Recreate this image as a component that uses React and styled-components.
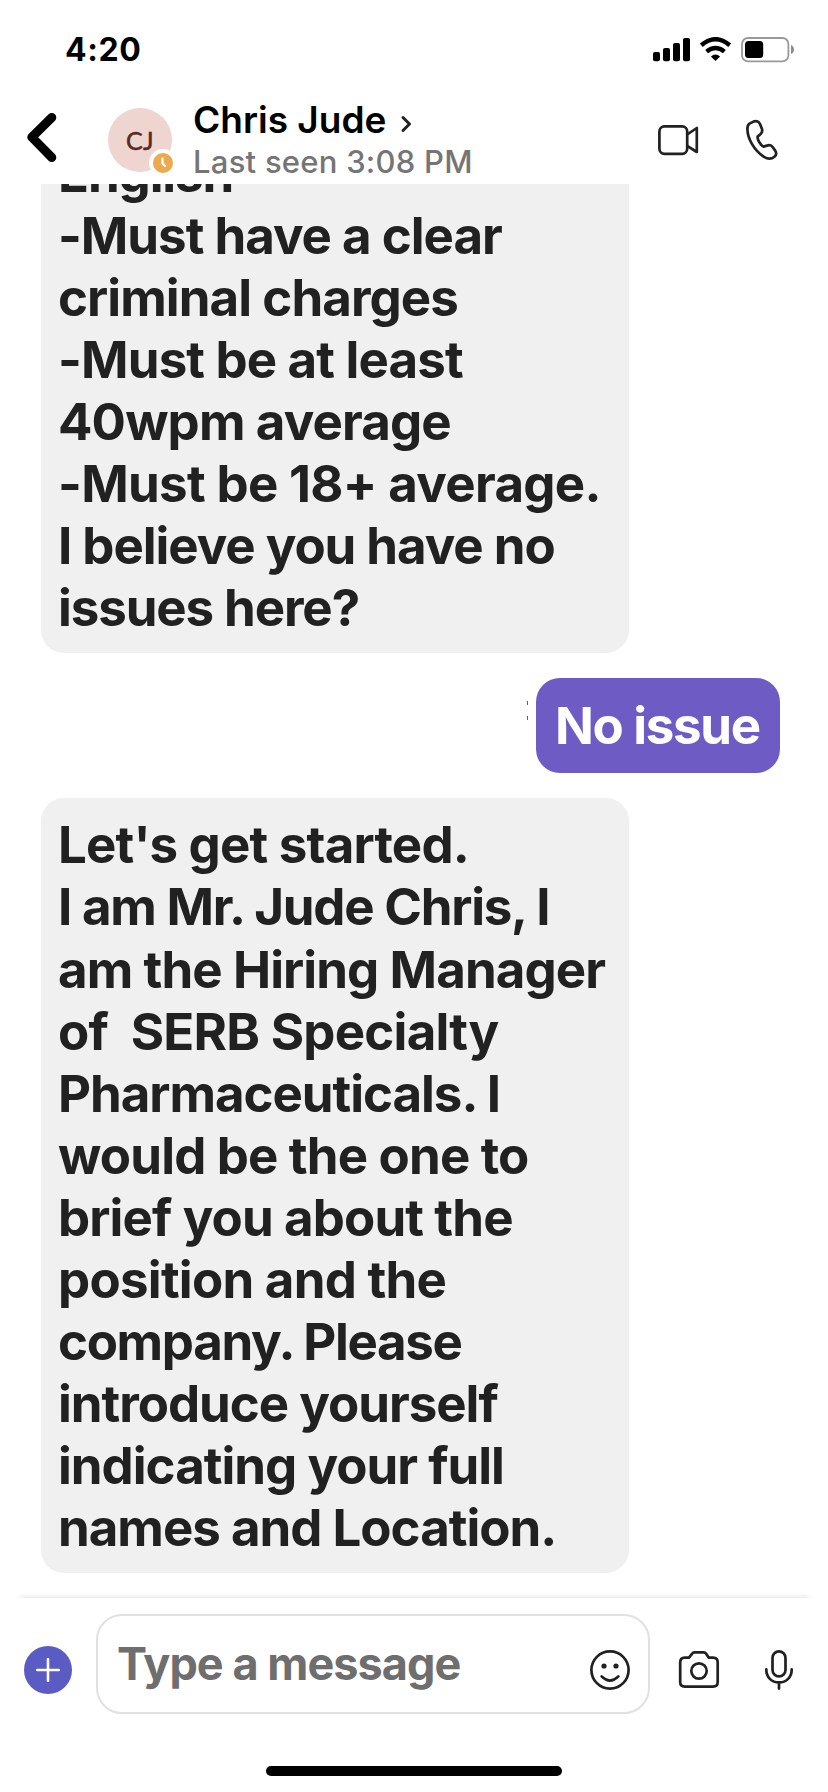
import React from 'react'
import styled, { createGlobalStyle } from 'styled-components';

const requirements = [
  { text: 'English', track: -1.1 },
  { text: '-Must have a clear', track: -1.0 },
  { text: 'criminal charges', track: -0.92 },
  { text: '-Must be at least', track: -0.83 },
  { text: '40wpm average', track: -0.87 },
  { text: '-Must be 18+ average.', track: -0.67 },
  { text: 'I believe you have no', track: -1.05 },
  { text: 'issues here?', track: -1.1 },
]

const intro = [
  { text: "Let's get started.", track: -0.8 },
  { text: 'I am Mr. Jude Chris, I', track: -1.23 },
  { text: 'am the Hiring Manager', track: -0.9 },
  { text: 'of  SERB Specialty', track: -0.75 },
  { text: 'Pharmaceuticals. I', track: -1.03 },
  { text: 'would be the one to', track: -0.83 },
  { text: 'brief you about the', track: -0.87 },
  { text: 'position and the', track: -0.73 },
  { text: 'company. Please', track: -1.33 },
  { text: 'introduce yourself', track: -1.02 },
  { text: 'indicating your full', track: -0.98 },
  { text: 'names and Location.', track: -1.0 },
]

const Message = ({ lines }) => (
  <Bubble>
    {lines.map((line) => (
      <Line key={line.text} $track={line.track}>{line.text}</Line>
    ))}
  </Bubble>
)

const StatusIcons = () => (
  <Icon width="142" height="26" viewBox="653 37 142 26">
    <g fill="#000">
      <rect x="653" y="52" width="7" height="9.2" rx="2" />
      <rect x="663" y="48" width="7" height="13.2" rx="2" />
      <rect x="673" y="43" width="7" height="18.2" rx="2" />
      <rect x="683" y="38" width="7" height="23.2" rx="2" />
      <path d="M715.5 61 L710.9 56.4 Q715.5 52.8 720.1 56.4 Z" />
      <rect x="745" y="41" width="18.2" height="17" rx="3.5" />
    </g>
    <path d="M701.3 45.2 Q715.5 33.2 729.7 45.2 M706.6 51.6 Q715.5 44.4 724.4 51.6" fill="none" stroke="#000" strokeWidth="4.4" />
    <rect x="742" y="38" width="46.4" height="23.4" rx="6" fill="none" stroke="#999" strokeWidth="1.8" />
    <path d="M791 45 Q794 46.5 794 49.5 Q794 52.5 791 54 Z" fill="#8c8c8c" />
  </Icon>
)

export default function App() {
  return (
    <Phone>
      <GlobalStyle />
      <StatusBar>
        <Time>4:20</Time>
        <StatusIcons />
      </StatusBar>
      <Header>
        <BackButton aria-label="Back">
          <Icon width="32" height="52" viewBox="26 111 32 52">
            <path d="M51.8 117.5 L31.8 137.2 L51.8 157.5" fill="none" stroke="#000" strokeWidth="9" strokeLinecap="round" strokeLinejoin="round" />
          </Icon>
        </BackButton>
        <Avatar>
          CJ
          <Presence>
            <Icon width="20" height="20" viewBox="0 0 20 20">
              <path d="M9.5 5.5 V10.5 L12 13" fill="none" stroke="#fff" strokeWidth="2.2" strokeLinecap="round" strokeLinejoin="round" />
            </Icon>
          </Presence>
        </Avatar>
        <Contact>
          <Name>
            Chris Jude
            <Icon width="12" height="18" viewBox="399 115 12 18">
              <path d="M402 117.5 L408.5 124 L402 130.5" fill="none" stroke="#222" strokeWidth="3" strokeLinecap="round" strokeLinejoin="round" />
            </Icon>
          </Name>
          <LastSeen>Last seen 3:08 PM</LastSeen>
        </Contact>
        <Calls>
          <Icon width="42" height="42" viewBox="657 119 42 42">
            <g fill="none" stroke="#212121" strokeWidth="2.7" strokeLinejoin="round">
              <rect x="659.4" y="126.4" width="27.8" height="27.4" rx="5" />
              <path d="M687.2 134.5 L696.8 128 V152 L687.2 145.8" />
            </g>
          </Icon>
          <Icon width="34" height="42" viewBox="745 119 34 42">
            <path d="M749.5 123.6 L753.5 121.6 C756.6 120.4 759.2 121.8 760.2 124.4 L761.8 128.4 C762.6 130.6 762 132.8 760.4 134.2 L757.6 136.6 C757.2 139.4 760.2 144.8 763.4 146.6 L768 145.4 C770 144.9 771.6 145.5 772.8 147.2 L775.2 150.6 C776.6 152.8 776.2 155.2 774.4 156.8 C771.6 159.2 767.6 159.2 763.6 156.6 C754.4 150.6 747.4 138.6 747.4 129 C747.4 126.6 748 124.6 749.5 123.6 Z" fill="none" stroke="#212121" strokeWidth="2.7" strokeLinejoin="round" />
          </Icon>
        </Calls>
      </Header>
      <Messages>
        <Message lines={requirements} />
        <SentRow>
          <Marks>
            <Mark />
            <Mark />
          </Marks>
          <SentBubble>
            <Line $track={-1.3}>No issue</Line>
          </SentBubble>
        </SentRow>
        <Message lines={intro} />
      </Messages>
      <Composer>
        <AddButton aria-label="Add">
          <Icon width="24" height="24" viewBox="0 0 24 24">
            <path d="M12 1.2 V22.8 M1.2 12 H22.8" stroke="#fff" strokeWidth="2.6" strokeLinecap="round" />
          </Icon>
        </AddButton>
        <InputBox>
          <Placeholder>Type a message</Placeholder>
          <Icon width="40" height="40" viewBox="0 0 40 40">
            <circle cx="20" cy="20" r="18.6" fill="none" stroke="#212121" strokeWidth="2.7" />
            <circle cx="14" cy="16" r="2.6" fill="#212121" />
            <circle cx="26" cy="16" r="2.6" fill="#212121" />
            <path d="M11.6 26.4 Q20 34.8 28.4 26.4" fill="none" stroke="#212121" strokeWidth="2.7" strokeLinecap="round" />
          </Icon>
        </InputBox>
        <Tools>
          <Icon width="42" height="40" viewBox="678 1650 42 40">
            <g fill="none" stroke="#212121" strokeWidth="2.7" strokeLinejoin="round">
              <path d="M684.8 1657.6 H689 L692.2 1653.6 Q693 1652.4 694.4 1652.4 H703.8 Q705.2 1652.4 706 1653.6 L708.6 1657.6 H713 Q717.7 1657.6 717.7 1662.3 V1682 Q717.7 1686.6 713 1686.6 H684.8 Q680.2 1686.6 680.2 1682 V1662.3 Q680.2 1657.6 684.8 1657.6 Z" />
              <circle cx="699" cy="1671" r="7.7" />
            </g>
          </Icon>
          <Icon width="30" height="40" viewBox="764 1650 30 40">
            <g fill="none" stroke="#212121" strokeWidth="2.7" strokeLinecap="round">
              <rect x="772.5" y="1651.4" width="13" height="25" rx="6.5" />
              <path d="M766.3 1669.4 C766.3 1677.2 771.6 1682.4 779 1682.4 C786.4 1682.4 791.7 1677.2 791.7 1669.4 M779 1682.4 V1688.6" />
            </g>
          </Icon>
        </Tools>
      </Composer>
      <HomeArea>
        <HomeBar />
      </HomeArea>
    </Phone>
  )
}

const GlobalStyle = createGlobalStyle`
*{
box-sizing:border-box;
}
body{
margin:0;
background-color:white;
font-family:Inter,"Liberation Sans",sans-serif;
}
`;
const Icon = styled.svg`
display:block;
flex-shrink:0;
`
const Phone = styled.div`
display:flex;
flex-direction:column;
width:828px;
height:1792px;
overflow:hidden;
background-color:white;
`;
const StatusBar = styled.div`
display:flex;
justify-content:space-between;
align-items:flex-end;
height:100px;
padding:0 33px 37px 65px;
`;
const Time = styled.div`
font-size:32px;
line-height:26px;
font-weight:700;
letter-spacing:0.6px;
color:black;
`;
const Header = styled.div`
display:flex;
align-items:center;
height:84px;
padding:0 49px 0 26px;
`;
const BackButton = styled.button`
margin:-10px 0 0;
padding:0;
border:none;
background:none;
`;
const Avatar = styled.div`
position:relative;
display:flex;
justify-content:center;
align-items:center;
width:64px;
height:64px;
margin:-4px 0 0 50px;
border-radius:50%;
background-color:#efd5cf;
color:#5a2822;
font-family:Lato,sans-serif;
font-size:25px;
letter-spacing:0.3px;
-webkit-text-stroke:0.5px #5a2822;
`;
const Presence = styled.div`
position:absolute;
right:-5px;
bottom:-5px;
width:28px;
height:28px;
border:4px solid white;
border-radius:50%;
background-color:#eca94e;
`;
const Contact = styled.div`
display:flex;
flex-direction:column;
gap:1px;
margin:-3px 0 0 21px;
`;
const Name = styled.div`
display:flex;
align-items:center;
gap:14px;
height:42px;
font-size:37px;
line-height:42px;
font-weight:600;
color:black;
svg{
    margin-top:7px;
}
`;
const LastSeen = styled.div`
font-size:31px;
line-height:40px;
font-weight:500;
letter-spacing:0.25px;
color:#757575;
`;
const Calls = styled.div`
display:flex;
gap:46px;
margin:-4px 0 0 auto;
`;
const Messages = styled.div`
display:flex;
flex-direction:column;
justify-content:flex-end;
gap:25px;
height:1414px;
padding:0 48px 25px 41px;
overflow:hidden;
`;
const Bubble = styled.div`
flex-shrink:0;
width:588px;
padding:16.3px 17px 13.5px;
border-radius:23px;
background-color:#f0f0f0;
color:#212121;
`;
const Line = styled.div`
font-size:51px;
line-height:62.1px;
font-weight:700;
font-feature-settings:"calt" 0;
white-space:pre;
letter-spacing:${(props) => props.$track}px;
`;
const SentRow = styled.div`
display:flex;
justify-content:flex-end;
flex-shrink:0;
`;
const Marks = styled.div`
display:flex;
flex-direction:column;
gap:11px;
padding:23px 8px 0 0;
`;
const Mark = styled.span`
width:1px;
height:4px;
background-color:#8a4a62;
`;
const SentBubble = styled.div`
width:244px;
height:95px;
padding:16.5px 19px;
border-radius:24px;
background-color:#6f5bc4;
color:white;
`;
const Composer = styled.div`
position:relative;
display:flex;
height:152px;
padding:16px 34px 0 24px;
&::before{
    content:'';
    position:absolute;
    left:16px;
    right:14px;
    top:-5px;
    height:5px;
    background:linear-gradient(to bottom,#fff,#ededed);
    mask-image:linear-gradient(to right,transparent,#000 7px,#000 calc(100% - 10px),transparent);
}
`;
const AddButton = styled.button`
display:flex;
justify-content:center;
align-items:center;
width:48px;
height:48px;
margin:32px 24px 0 0;
padding:0;
border:none;
border-radius:50%;
background-color:#5b5bc4;
`
const InputBox = styled.div`
display:flex;
justify-content:space-between;
width:554px;
height:100px;
padding:0 18px 0 19px;
border:2px solid #e1e1e1;
border-radius:26px;
svg{
    margin-top:34px;
}
`;
const Placeholder = styled.div`
padding-top:21px;
font-size:45px;
line-height:54px;
font-weight:700;
letter-spacing:-0.95px;
color:#6e6e6e;
`;
const Tools = styled.div`
display:flex;
gap:44px;
margin:36px 0 0 28px;
`;
const HomeArea = styled.div`
display:flex;
justify-content:center;
padding-top:16px;
`;
const HomeBar = styled.div`
width:296px;
height:10px;
border-radius:5px;
background-color:black;
`;
